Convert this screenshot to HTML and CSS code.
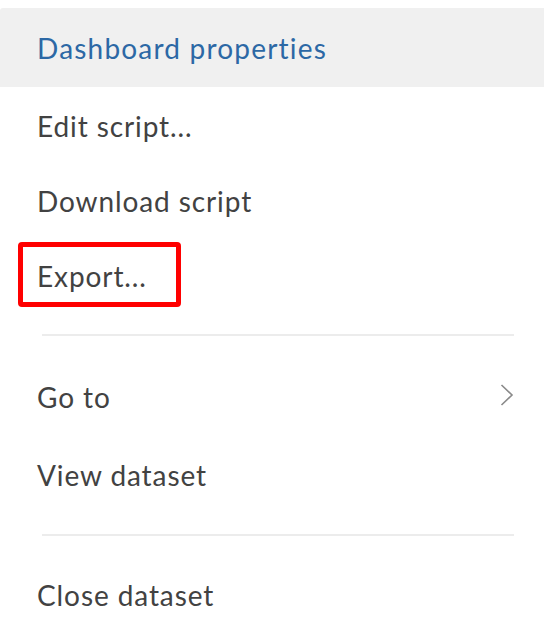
FILE: index.html
```html
<!DOCTYPE html>
<html lang="en">
<head>
<meta charset="utf-8">
<title>Menu</title>
<link rel="stylesheet" href="styles.css">
</head>
<body>
<div class="menu">
  <div class="menu-header">Dashboard properties</div>
  <ul class="menu-list">
    <li class="menu-item item-first">Edit script...</li>
    <li class="menu-item">Download script</li>
    <li class="menu-item highlighted">Export...<span class="annotation"></span></li>
    <li class="divider"></li>
    <li class="menu-item submenu">
      <span>Go to</span>
      <svg class="chevron" width="14" height="22" viewBox="0 0 14 22" aria-hidden="true"><path d="M1.5 1 L12 11 L1.5 21" fill="none" stroke="#8a8a8a" stroke-width="1.6"/></svg>
    </li>
    <li class="menu-item">View dataset</li>
    <li class="divider divider-2"></li>
    <li class="menu-item">Close dataset</li>
  </ul>
</div>
</body>
</html>
```
FILE: styles.css
```css
html, body {
  margin: 0;
  padding: 0;
  background: #ffffff;
}
.menu {
  width: 544px;
  padding-top: 8px;
  font-family: Lato, "Open Sans", sans-serif;
  font-size: 28px;
  letter-spacing: 0.9px;
  color: #424242;
}
.menu-header {
  height: 79px;
  display: flex;
  align-items: center;
  padding-left: 37px;
  background: #f0f0f0;
  color: #2c68a5;
  letter-spacing: 1.2px;
  border-top-left-radius: 3px;
}
.menu-list {
  list-style: none;
  margin: 0;
  padding: 1px 0 0 0;
}
.menu-item {
  position: relative;
  height: 75px;
  display: flex;
  align-items: center;
  justify-content: space-between;
  padding: 0 30px 0 37px;
}
.submenu {
  height: 80px;
}
.chevron {
  display: block;
  margin-top: -4px;
}
.divider {
  height: 2px;
  background: #ececec;
  margin: 21px 30px 21px 42px;
}
.divider-2 {
  margin-top: 22px;
  margin-bottom: 21px;
}
.annotation {
  position: absolute;
  left: 18px;
  top: 4px;
  width: 163px;
  height: 65px;
  box-sizing: border-box;
  border: 5px solid #ff0000;
  border-radius: 4px;
}
```
